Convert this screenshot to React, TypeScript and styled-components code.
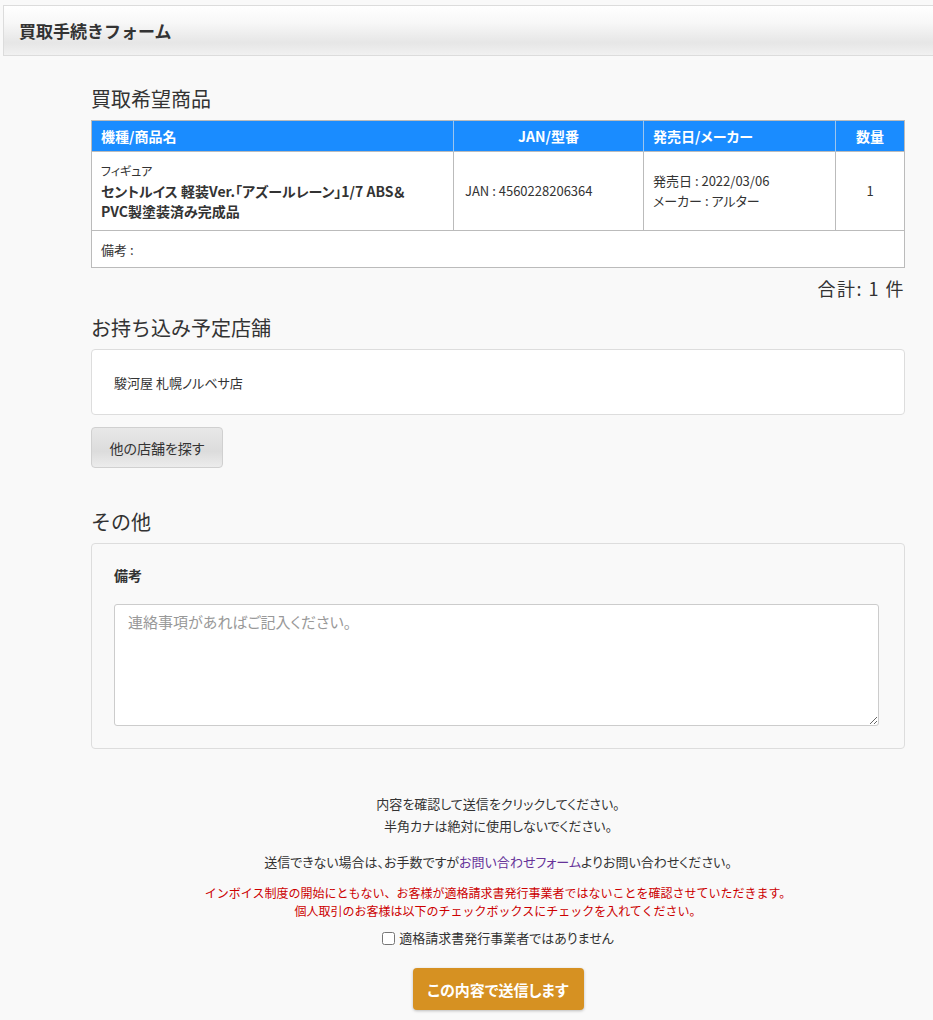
import React from 'react';
import styled, { createGlobalStyle } from 'styled-components';

const GlobalStyle = createGlobalStyle`
  html, body {
    margin: 0;
    padding: 0;
    background: #f9f9f9;
  }
  body {
    font-family: "Noto Sans CJK JP", "Noto Sans", "Liberation Sans", sans-serif;
    font-feature-settings: "palt";
    color: #333;
    font-size: 13px;
  }
`;

const Page = styled.div`
  padding: 5px 0 10px 3px;
`;

const HeaderBar = styled.div`
  height: 49px;
  border: 1px solid #dcdcdc;
  border-right: none;
  background: linear-gradient(to bottom, #ffffff 0%, #f7f7f7 35%, #e6e6e6 75%, #f1f1f1 100%);
  display: flex;
  align-items: center;
  padding-left: 15px;
`;

const HeaderTitle = styled.h1`
  margin: 0;
  font-size: 17px;
  font-weight: bold;
  font-feature-settings: normal;
  color: #333;
`;

const Content = styled.div`
  padding: 0 28px 0 88px;
`;

const SectionTitle = styled.h2<{ $top: number }>`
  margin: ${({ $top }) => $top}px 0 9px;
  font-size: 20px;
  font-weight: normal;
  font-feature-settings: normal;
  line-height: 24px;
  color: #333;
`;

const ItemTable = styled.table`
  width: 100%;
  table-layout: fixed;
  border-collapse: collapse;
  background: #fff;
  border: 1px solid #bbb;
`;

const HeadCell = styled.th<{ $align?: string; $width?: number }>`
  background: #1a8cff;
  color: #fff;
  font-size: 14px;
  font-weight: bold;
  height: 30px;
  padding: 0 9px;
  text-align: ${({ $align }) => $align || 'left'};
  border-left: 1px solid #9cc5ee;
  width: ${({ $width }) => ($width ? `${$width - 18}px` : 'auto')};
  &:first-child {
    border-left: none;
  }
`;

const BodyCell = styled.td<{ $align?: string; $pad?: number }>`
  border: 1px solid #bbb;
  padding: 8px ${({ $pad }) => $pad ?? 9}px;
  height: 62px;
  vertical-align: middle;
  text-align: ${({ $align }) => $align || 'left'};
  line-height: 20px;
  color: #333;
`;

const NoteCell = styled.td`
  border: 1px solid #bbb;
  padding: 0 9px;
  height: 36px;
  color: #333;
`;

const Category = styled.div`
  font-size: 12px;
`;

const ProductName = styled.div`
  font-size: 14px;
  font-weight: bold;
`;

const Total = styled.div`
  text-align: right;
  font-size: 18px;
  letter-spacing: 1.5px;
  margin-top: 8px;
  line-height: 24px;
  color: #333;
`;

const StoreBox = styled.div`
  background: #fff;
  border: 1px solid #ddd;
  border-radius: 4px;
  height: 64px;
  padding-left: 22px;
  display: flex;
  align-items: center;
  font-size: 13px;
`;

const GrayButton = styled.button`
  margin-top: 12px;
  width: 132px;
  height: 41px;
  border: 1px solid #d0d0d0;
  border-radius: 4px;
  background: linear-gradient(to bottom, #e8e8e8 0%, #dcdcdc 60%, #ececec 100%);
  font-family: inherit;
  font-feature-settings: "palt";
  font-size: 14px;
  color: #333;
  cursor: pointer;
`;

const OtherBox = styled.div`
  border: 1px solid #ddd;
  border-radius: 4px;
  padding: 19px 25px 22px 22px;
  background: #f9f9f9;
`;

const FieldLabel = styled.div`
  font-size: 14px;
  font-weight: bold;
  line-height: 24px;
  margin-bottom: 17px;
  color: #333;
`;

const NoteArea = styled.textarea`
  display: block;
  width: 100%;
  box-sizing: border-box;
  height: 122px;
  border: 1px solid #ccc;
  border-radius: 3px;
  background: #fff;
  padding: 6px 13px;
  font-family: inherit;
  font-feature-settings: "palt";
  font-size: 15px;
  color: #333;
  &::placeholder {
    color: #999;
  }
`;

const Footer = styled.div`
  margin-top: 44px;
  text-align: center;
  font-size: 13px;
  color: #333;
`;

const Line = styled.p<{ $gap?: number }>`
  margin: ${({ $gap }) => $gap || 0}px 0 0;
  line-height: 22px;
`;

const ContactLink = styled.a`
  color: #663399;
  text-decoration: none;
`;

const Notice = styled.p`
  margin: 11px 0 0;
  color: #cc0000;
  font-size: 12px;
  font-feature-settings: normal;
  line-height: 17.5px;
`;

const CheckRow = styled.label`
  display: inline-flex;
  align-items: center;
  gap: 4px;
  margin-top: 8px;
  font-size: 13px;
  line-height: 22px;
`;

const CheckBox = styled.input`
  margin: 0;
  width: 13px;
  height: 13px;
`;

const SubmitButton = styled.button`
  display: block;
  margin: 19px auto 0;
  width: 171px;
  height: 42px;
  border: none;
  border-radius: 4px;
  background: #d69122;
  box-shadow: 0 1px 3px rgba(0, 0, 0, 0.25);
  color: #fff;
  font-family: inherit;
  font-feature-settings: "palt";
  font-size: 15px;
  font-weight: bold;
  cursor: pointer;
`;

export default function App() {
  return (
    <>
      <GlobalStyle />
      <Page>
        <HeaderBar>
          <HeaderTitle>買取手続きフォーム</HeaderTitle>
        </HeaderBar>

        <Content>
          <SectionTitle $top={31}>買取希望商品</SectionTitle>
          <ItemTable>
            <thead>
              <tr>
                <HeadCell>機種/商品名</HeadCell>
                <HeadCell $align="center" $width={189}>JAN/型番</HeadCell>
                <HeadCell $width={191}>発売日/メーカー</HeadCell>
                <HeadCell $align="center" $width={68}>数量</HeadCell>
              </tr>
            </thead>
            <tbody>
              <tr>
                <BodyCell>
                  <Category>フィギュア</Category>
                  <ProductName>
                    セントルイス 軽装Ver.「アズールレーン」1/7 ABS＆
                    <br />
                    PVC製塗装済み完成品
                  </ProductName>
                </BodyCell>
                <BodyCell $pad={11}>JAN : 4560228206364</BodyCell>
                <BodyCell>
                  発売日 : 2022/03/06
                  <br />
                  メーカー : アルター
                </BodyCell>
                <BodyCell $align="center">1</BodyCell>
              </tr>
              <tr>
                <NoteCell colSpan={4}>備考 :</NoteCell>
              </tr>
            </tbody>
          </ItemTable>
          <Total>合計: 1 件</Total>

          <SectionTitle $top={16}>お持ち込み予定店舗</SectionTitle>
          <StoreBox>駿河屋 札幌ノルベサ店</StoreBox>
          <GrayButton type="button">他の店舗を探す</GrayButton>

          <SectionTitle $top={42}>その他</SectionTitle>
          <OtherBox>
            <FieldLabel>備考</FieldLabel>
            <NoteArea placeholder="連絡事項があればご記入ください。" />
          </OtherBox>

          <Footer>
            <Line>内容を確認して送信をクリックしてください。</Line>
            <Line>半角カナは絶対に使用しないでください。</Line>
            <Line $gap={14}>
              送信できない場合は、お手数ですが<ContactLink href="#">お問い合わせフォーム</ContactLink>よりお問い合わせください。
            </Line>
            <Notice>
              インボイス制度の開始にともない、お客様が適格請求書発行事業者ではないことを確認させていただきます。
              <br />
              個人取引のお客様は以下のチェックボックスにチェックを入れてください。
            </Notice>
            <CheckRow>
              <CheckBox type="checkbox" />
              適格請求書発行事業者ではありません
            </CheckRow>
            <SubmitButton type="button">この内容で送信します</SubmitButton>
          </Footer>
        </Content>
      </Page>
    </>
  );
}
